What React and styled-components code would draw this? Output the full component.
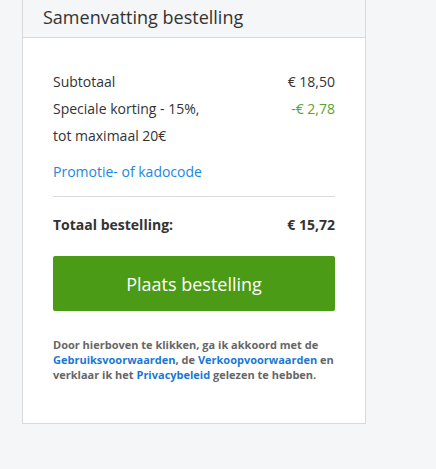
import React from "react";
import styled, { createGlobalStyle } from "styled-components";

const Global = createGlobalStyle`
  html, body { margin: 0; padding: 0; background: #f5f6f8; }
  body { font-family: "Open Sans", "Noto Sans", sans-serif; color: #333; }
`;

const Page = styled.div`
  padding-left: 22px;
  min-height: 469px;
`;

const Card = styled.section`
  width: 342px;
  background: #fff;
  border: 1px solid #d6d9dd;
  border-top: none;
`;

const Header = styled.header`
  height: 38px;
  box-sizing: border-box;
  background: #f5f6f8;
  border-bottom: 1px solid #d6d9dd;
  padding: 0 20px;
  display: flex;
  align-items: center;
`;

const Title = styled.h2`
  margin: 0;
  font-size: 18px;
  font-weight: 400;
  color: #333;
  line-height: 24px;
  margin-top: -3px;
`;

const Body = styled.div`
  padding: 30px 30px 41px;
`;

const Row = styled.div`
  display: flex;
  justify-content: space-between;
  font-size: 14px;
  line-height: 27px;
  font-weight: ${(p) => (p.$bold ? 700 : 400)};
`;

const Amount = styled.span`
  color: ${(p) => p.$color || "#333"};
`;

const Label = styled.span`
  width: ${(p) => (p.$narrow ? "160px" : "auto")};
`;

const PromoLink = styled.a`
  display: block;
  margin-top: 9px;
  font-size: 14px;
  line-height: 27px;
  color: #1c87e0;
  text-decoration: none;
`;

const Divider = styled.hr`
  margin: 11px 0 14px;
  border: none;
  border-top: 1px solid #d6d9dd;
`;

const Button = styled.button`
  display: block;
  width: 100%;
  height: 55px;
  margin-top: 18px;
  border: none;
  border-radius: 2px;
  background: #4b9b17;
  color: #fff;
  font-family: "Open Sans", sans-serif;
  font-size: 18px;
  font-weight: 400;
  cursor: pointer;
`;

const Legal = styled.p`
  margin: 26px 0 0;
  font-size: 11px;
  line-height: 15px;
  font-weight: 700;
  color: #666;
`;

const LegalLink = styled.a`
  color: #1a78d4;
  text-decoration: none;
`;

export default function App() {
  return (
    <>
      <Global />
      <Page>
        <Card>
          <Header>
            <Title>Samenvatting bestelling</Title>
          </Header>
          <Body>
            <Row>
              <Label>Subtotaal</Label>
              <Amount>€ 18,50</Amount>
            </Row>
            <Row>
              <Label $narrow>Speciale korting - 15%, tot maximaal 20€</Label>
              <Amount $color="#5ba22e">-€ 2,78</Amount>
            </Row>
            <PromoLink href="#">Promotie- of kadocode</PromoLink>
            <Divider />
            <Row $bold>
              <Label>Totaal bestelling:</Label>
              <Amount>€ 15,72</Amount>
            </Row>
            <Button>Plaats bestelling</Button>
            <Legal>
              Door hierboven te klikken, ga ik akkoord met de{" "}
              <LegalLink href="#">Gebruiksvoorwaarden</LegalLink>, de{" "}
              <LegalLink href="#">Verkoopvoorwaarden</LegalLink> en verklaar ik het{" "}
              <LegalLink href="#">Privacybeleid</LegalLink> gelezen te hebben.
            </Legal>
          </Body>
        </Card>
      </Page>
    </>
  );
}
